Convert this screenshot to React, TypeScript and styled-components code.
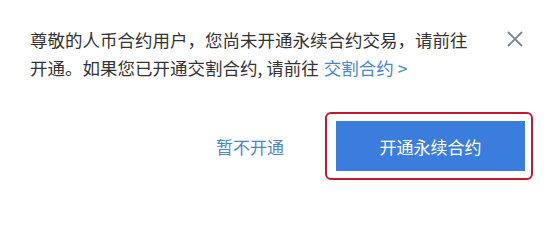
import React from 'react';
import styled, { createGlobalStyle } from 'styled-components';

const GlobalStyle = createGlobalStyle`
  body {
    margin: 0;
    background: #fff;
    font-family: "Noto Sans CJK SC", "Noto Sans", sans-serif;
  }
`;

const Dialog = styled.div`
  width: 555px;
  height: 207px;
  box-sizing: border-box;
  padding: 26px 22px 0 30px;
  background: #fff;
`;

const Header = styled.div`
  display: flex;
  justify-content: space-between;
  align-items: flex-start;
`;

const Message = styled.p`
  margin: 0;
  width: 450px;
  font-size: 17.5px;
  line-height: 28px;
  color: #333;
`;

const Link = styled.a`
  display: inline-block;
  margin-left: 5px;
  color: #4a86d6;
  text-decoration: none;
`;

const CloseButton = styled.button`
  border: none;
  background: none;
  padding: 0;
  margin: 5px 10px 0 0;
  cursor: pointer;
  color: #7c8591;
  display: flex;
`;

const Footer = styled.div`
  display: flex;
  justify-content: flex-end;
  align-items: center;
  gap: 41px;
  margin-top: 30px;
`;

const GhostButton = styled.button`
  border: none;
  background: none;
  padding: 0;
  font-family: inherit;
  font-size: 17px;
  color: #4a86cc;
  cursor: pointer;
`;

const Highlight = styled.div`
  border: 2px solid #c8162b;
  border-radius: 6px;
  padding: 7px 6px 7px 9px;
`;

const PrimaryButton = styled.button`
  width: 189px;
  height: 50px;
  border: none;
  background: #3b7ddd;
  color: #fff;
  font-family: inherit;
  font-size: 17px;
  cursor: pointer;
`;

export default function App(): React.ReactElement {
  return (
    <>
      <GlobalStyle />
      <Dialog>
        <Header>
          <Message>
            尊敬的人币合约用户，您尚未开通永续合约交易，请前往开通。如果您已开通交割合约, 请前往
            <Link href="#">交割合约 &gt;</Link>
          </Message>
          <CloseButton aria-label="关闭">
            <svg width="16" height="16" viewBox="0 0 16 16">
              <path d="M1.5 1.5 L14.5 14.5 M14.5 1.5 L1.5 14.5" stroke="currentColor" strokeWidth="1.8" strokeLinecap="round" />
            </svg>
          </CloseButton>
        </Header>
        <Footer>
          <GhostButton>暂不开通</GhostButton>
          <Highlight>
            <PrimaryButton>开通永续合约</PrimaryButton>
          </Highlight>
        </Footer>
      </Dialog>
    </>
  );
}
